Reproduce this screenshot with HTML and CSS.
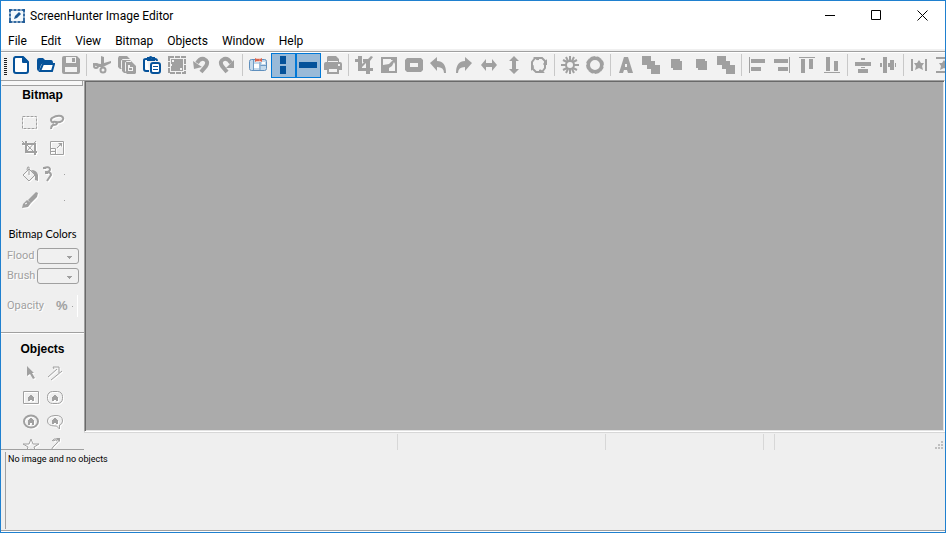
FILE: index.html
```html
<!DOCTYPE html>
<html lang="en">
<head>
<meta charset="utf-8">
<title>ScreenHunter Image Editor</title>
<link rel="stylesheet" href="styles.css">
</head>
<body>
<header class="titlebar">
  <svg class="logo" viewBox="0 0 16 14" aria-hidden="true"><rect x="1" y="1" width="14" height="12" fill="#f4f9fc" stroke="#1a5794" stroke-width="1"/><path d="M0 1h3M5 1h2M9 1h2M13 1h3M0 13h3M5 13h2M9 13h2M13 13h3M1 0v3M1 5v2M1 9v5M15 0v3M15 5v2M15 9v5" stroke="#1a5794" stroke-width="1.500"/><path d="M5 10l1-3 4-4 2 2-4 4z" fill="#1a5794"/></svg>
  <h1 class="title">ScreenHunter Image Editor</h1>
  <button class="win" aria-label="Minimize"><svg viewBox="0 0 11 11"><path d="M0 5.500h10"/></svg></button>
  <button class="win" aria-label="Maximize"><svg viewBox="0 0 11 11"><path d="M.5.5h9v9h-9z"/></svg></button>
  <button class="win" aria-label="Close"><svg viewBox="0 0 11 11"><path d="M.5.5l10 10M10.500.5l-10 10"/></svg></button>
</header>
<nav class="menu">
  <button>File</button><button>Edit</button><button>View</button><button>Bitmap</button><button>Objects</button><button>Window</button><button>Help</button>
</nav>
<div class="toolbar" role="toolbar" aria-label="Main">
  <span class="grip"></span>
  <button class="tool on" aria-label="New"><svg viewBox="0 0 18 18"><path class="l" d="M3 1h8l5 5v9q0 2-2 2H4q-2 0-2-2V3q0-2 2-2z"/><path d="M10 1v5q0 1 1 1h5V5l-4-4z"/></svg></button>
  <button class="tool on" aria-label="Open"><svg viewBox="0 0 18 18"><path d="M0 4q0-2 2-2h4l2 2h6q2 0 2 3H7q-2 0-3 2l-2 6q-2 0-2-2z"/><path class="l" d="M6 8h11l-2 7H3z"/></svg></button>
  <button class="tool" aria-label="Save"><svg viewBox="0 0 18 18"><path fill-rule="evenodd" d="M2 0h13l3 3v13q0 2-2 2H2q-2 0-2-2V2q0-2 2-2zM4 1v6h10V1zM3 11v5h12v-5z"/><path d="M10 2h3v4h-3z"/></svg></button>
  <span class="sep"></span>
  <button class="tool" aria-label="Cut"><svg viewBox="0 0 18 18"><path d="M8 0l3 1v6l7-2v2l-8 4H6L0 9V7l8 1z"/><circle class="l" cx="3" cy="10" r="2"/><circle class="l" cx="10" cy="14" r="2.500"/></svg></button>
  <button class="tool" aria-label="Copy"><svg viewBox="0 0 18 18"><path d="M1 0h8l3 3H5L4 13H2l-2-2V2z"/><path d="M5 4h7l2 2H8v11H6l-2-2V6z"/><path fill="none" stroke="#f2f2f2" d="M3.500 12.500v-8l1-1H10M7.500 15.500v-9l1-1H13"/><path fill-rule="evenodd" d="M8 6h6l4 4v7l-1 1H9l-1-1zM10 9v6h5v-4h-3V9z"/><path d="M11 12h3v2h-3z"/></svg></button>
  <button class="tool on" aria-label="Paste"><svg viewBox="0 0 18 18"><path class="l" d="M6 15H3q-2 0-2-2V4q0-1 2-1h1M12 3q2 0 2 2"/><path class="l" d="M5 4V2h2q0-2 2 0h2v2z"/><rect class="l" x="8" y="7" width="9" height="10" rx="2"/><path d="M10 10h5v1h-5zM10 13h5v1h-5z"/></svg></button>
  <button class="tool" aria-label="Select all"><svg viewBox="0 0 18 18"><path d="M3 3h12v12H3z"/><path class="l" stroke-dasharray="5 1" d="M1 1h16v16H1z"/><path fill="#f2f2f2" d="M4 4h2v2H4zM12 12h2v2h-2zM3 8h1v2H3z"/></svg></button>
  <button class="tool" aria-label="Undo"><svg viewBox="0 0 18 18"><path fill="none" stroke="currentColor" stroke-width="4" d="M4 7q3-5 7-4 5 2 2 7l-5 6"/><path d="M0 5l9 6-8 2z"/></svg></button>
  <button class="tool" aria-label="Redo"><svg viewBox="0 0 18 18"><path fill="none" stroke="currentColor" stroke-width="4" d="M13 7Q10 2 6 3 1 5 4 10l5 6"/><path d="M16 4v8H8z"/></svg></button>
  <span class="sep"></span>
  <button class="tool" aria-label="Merge images"><svg viewBox="0 0 18 18"><rect x=".5" y="3.500" width="17" height="11" rx="2" fill="#c5daec" stroke="#5f8fbd"/><path d="M4.500 4v10M11 4v10M11.500 9.500H17" fill="none" stroke="#6f9bc5"/><path d="M6 2h7v4H6z" fill="#f3d3cc"/><path d="M6 2l3 2-3 2zM13 2l-3 2 3 2zM8 3h3v2H8z" fill="#d9634d"/><path d="M5 8h5v4H5zM13 6h3v2h-3z" fill="#fff"/></svg></button>
  <button class="tool pressed" aria-label="Tile vertically" aria-pressed="true"><svg viewBox="0 0 18 18"><path d="M6 0h6v8H6zM6 10h6v8H6z"/></svg></button>
  <button class="tool pressed" aria-label="Tile horizontally" aria-pressed="true"><svg viewBox="0 0 18 18"><path d="M0 6h18v6H0z"/></svg></button>
  <button class="tool" aria-label="Print"><svg viewBox="0 0 18 18"><path fill-rule="evenodd" d="M4 0h8l3 3v3h1q2 0 2 2v6h-3v4H3v-4H0V8q0-2 2-2h1V1zM4 5v1h10V5zM5 13v3h8v-3zM14 8v2h2V8z"/></svg></button>
  <span class="sep"></span>
  <button class="tool" aria-label="Crop"><svg viewBox="0 0 18 18"><path d="M3 0h4v12h11v3H3V6H0V3h3zM8 3h5l3-3 2 1-3 4v13h-4V7l-5 5-1-2 4-4H8z"/></svg></button>
  <button class="tool" aria-label="Resize"><svg viewBox="0 0 18 18"><path d="M1 1h16v16H1z"/><path fill="#f2f2f2" d="M3 3h8v1h2L9 8l-6 1zM9 12l3-2 2-4 1 2v7H9z"/></svg></button>
  <button class="tool" aria-label="Frame"><svg viewBox="0 0 18 18"><path fill-rule="evenodd" d="M2 2h14l2 2v10l-2 2H2l-2-2V4zM5 7v4h8V7z"/></svg></button>
  <button class="tool" aria-label="Rotate left"><svg viewBox="0 0 18 18"><path d="M0 7l7-6v4q9 0 9 12h-2q0-6-7-6v4z"/></svg></button>
  <button class="tool" aria-label="Rotate right"><svg viewBox="0 0 18 18"><path d="M17 7l-7-6v4q-9 0-9 12h2q0-6 7-6v4z"/></svg></button>
  <button class="tool" aria-label="Flip horizontal"><svg viewBox="0 0 18 18"><path d="M1 9l5-6v4h6V3l5 6-5 6v-4H6v4z"/></svg></button>
  <button class="tool" aria-label="Flip vertical"><svg viewBox="0 0 18 18"><path d="M9 0l5 5h-3v8h3l-5 5-5-5h3V5H4z"/></svg></button>
  <button class="tool" aria-label="Rotate freely"><svg viewBox="0 0 18 18"><path class="l" d="M7 2h5l3 3v7l-3 4H6l-4-4V6l3-4z"/><path d="M3 1h6v5zM17 3v6h-5zM15 17H9v-5zM1 15V9h5z"/><circle cx="8.500" cy="9" r="5" fill="#f2f2f2"/></svg></button>
  <span class="sep"></span>
  <button class="tool" aria-label="Brightness"><svg viewBox="0 0 18 18"><circle class="l" cx="9" cy="9" r="4"/><path class="ray" d="M9 0v5M9 13v5M0 9h5M13 9h5M2 4l4 2M12 12l4 2M16 4l-4 2M2 14l4-2M5 1l2 4M13 1l-2 4M5 17l2-4M13 17l-2-4"/></svg></button>
  <button class="tool" aria-label="Contrast"><svg viewBox="0 0 18 18"><circle cx="9" cy="9" r="7" fill="none" stroke="currentColor" stroke-width="4"/><circle cx="9" cy="9" r="9" fill="none" stroke="#f2f2f2" stroke-width="1" stroke-dasharray="2 5"/></svg></button>
  <span class="sep"></span>
  <button class="tool" aria-label="Text"><svg viewBox="0 0 18 18"><path fill-rule="evenodd" d="M7 1h4l5 16h-5l-1-3H7l-1 3H2zM8 8v3h2V8z"/></svg></button>
  <button class="tool" aria-label="Bring to front"><svg viewBox="0 0 18 18"><path d="M0 0h9v5h4v4h5v9H9v-5H5V9H0z"/></svg></button>
  <button class="tool" aria-label="Bring forward"><svg viewBox="0 0 18 18"><path d="M4 3h9v2h2v9H6v-2H4z"/></svg></button>
  <button class="tool" aria-label="Send backward"><svg viewBox="0 0 18 18"><path d="M4 3h9v2h2v9H6v-2H4z"/></svg></button>
  <button class="tool" aria-label="Send to back"><svg viewBox="0 0 18 18"><path d="M0 0h9v5h4v4h5v9H9v-5H5V9H0z"/></svg></button>
  <span class="sep"></span>
  <button class="tool" aria-label="Align left"><svg viewBox="0 0 18 18"><path d="M1 1h1v16H1zM3 3h14v4H3zM3 11h10v4H3z"/></svg></button>
  <button class="tool" aria-label="Align right"><svg viewBox="0 0 18 18"><path d="M16 1h1v16h-1zM1 3h14v4H1zM5 11h10v4H5z"/></svg></button>
  <button class="tool" aria-label="Align top"><svg viewBox="0 0 18 18"><path d="M1 1h16v1H1zM3 3h4v14H3zM11 3h4v10h-4z"/></svg></button>
  <button class="tool" aria-label="Align bottom"><svg viewBox="0 0 18 18"><path d="M1 16h16v1H1zM3 1h4v14H3zM11 5h4v10h-4z"/></svg></button>
  <span class="sep"></span>
  <button class="tool" aria-label="Center vertically"><svg viewBox="0 0 18 18"><path d="M7 2h4v2H7zM1 6h16v4H1zM7 11h4v1H7zM4 13h10v4H4z"/></svg></button>
  <button class="tool" aria-label="Center horizontally"><svg viewBox="0 0 18 18"><path d="M1 7h2v4H1zM4 1h4v16H4zM9 7h2v4H9zM11 4h4v10h-4zM16 7h1v4h-1z"/></svg></button>
  <span class="sep"></span>
  <button class="tool" aria-label="Space across"><svg viewBox="0 0 18 18"><path d="M1 3h2v12H1zM15 3h2v12h-2zM9 4l2 3h3l-2 3 1 4-4-2-4 2 1-4-2-3h3z"/></svg></button>
  <button class="tool" aria-label="Space down"><svg viewBox="0 0 18 18"><path d="M1 1h14v2H1zM1 15h14v2H1zM9 4l2 3h3l-2 3 1 4-4-2-4 2 1-4-2-3h3z"/></svg></button>
</div>
<main class="work">
  <aside class="palettes">
    <section class="palette">
      <div class="handle"></div>
      <h2>Bitmap</h2>
      <div class="rows bitmap">
        <div class="row"><button aria-label="Select area"><svg viewBox="0 0 16 16"><path class="n" stroke-dasharray="3 1" d="M.5 2.500h14v12H.5z"/></svg></button><button aria-label="Lasso"><svg viewBox="0 0 16 16"><path class="n" stroke-width="2" d="M5 9L3 8q-2-2 0-4 5-3 9-2 4 2 1 5-3 2-6 1"/><path class="n" stroke-width="2" d="M4 8q3-1 4 1 0 2-4 2-2 1-2 4"/></svg></button></div>
        <div class="row"><button aria-label="Crop bitmap"><svg viewBox="0 0 16 16"><path class="n" stroke-width="2" d="M0 4h13v11M4 1v11h11"/><path class="n" d="M0 1l3 3M14 1L5 11M5 5l7 7"/></svg></button><button aria-label="Resize bitmap"><svg viewBox="0 0 16 16"><path class="n" d="M1.500 1.500h13v13h-13zM1.500 8.500h5v6M1 11.500h5M8 8l4-4"/><path d="M9 3h4v4z"/></svg></button></div>
        <div class="row tight"><button aria-label="Flood fill"><svg viewBox="0 0 16 16"><path class="n" d="M1 9l6-6 6 6-6 6zM7 9V1Q5 0 5 4"/><path d="M9 4q6 0 7 5v6l-3-1V9z"/></svg></button><button aria-label="Magic wand"><svg viewBox="0 0 16 16"><path class="n" stroke-width="2" d="M2 2q5-2 6 1 0 3-4 3 5 0 5 3l-4 6"/><path d="M1 1h3v2H1zM3 5h3v3H3z"/></svg></button><span class="dot"></span></div>
        <div class="row tight"><button aria-label="Brush"><svg viewBox="0 0 16 16"><path d="M14 0l2 1-1 4-6 6-3-3zM5 8l4 3-3 4-6 1 1-4z"/><path d="M3 12l2-1" stroke="#fff"/></svg></button><span class="blank"></span><span class="dot"></span></div>
      </div>
      <h3>Bitmap Colors</h3>
      <div class="field"><label for="flood">Flood</label><select id="flood" disabled><option></option></select></div>
      <div class="field"><label for="brush">Brush</label><select id="brush" disabled><option></option></select></div>
      <div class="field opacity"><span>Opacity</span><button aria-label="Opacity percent">%</button><span class="dot"></span><span class="edge"></span></div>
    </section>
    <section class="palette">
      <h2>Objects</h2>
      <div class="rows objects">
        <div class="row"><button aria-label="Pointer"><svg viewBox="0 0 16 16"><path d="M4 1l7 7H9l3 5-2 1-3-5-3 2z"/></svg></button><button aria-label="Arrow"><svg viewBox="0 0 16 16"><path class="n" d="M1 12L10 4M4 15L15 6M6 2h6v6M6 2l1 2"/></svg></button></div>
        <div class="row"><button aria-label="Rectangle text"><svg viewBox="0 0 16 16"><path class="n" d="M.5 2.500h15v12H.5z"/><path d="M7 6h2v1h1v1h1v4H9v-1H7v1H5V8h1V7h1z"/></svg></button><button aria-label="Rounded text"><svg viewBox="0 0 16 16"><rect class="n" x=".5" y="2.500" width="15" height="12" rx="5"/><path d="M7 6h2v1h1v1h1v4H9v-1H7v1H5V8h1V7h1z"/></svg></button></div>
        <div class="row"><button aria-label="Ellipse text"><svg viewBox="0 0 16 16"><ellipse class="n" cx="8" cy="8.500" rx="7" ry="6" stroke-width="2"/><path d="M7 5h2v1h1v1h1v5H9v-2H7v2H5V7h1V6h1z"/></svg></button><button aria-label="Speech bubble"><svg viewBox="0 0 16 16"><path class="n" d="M8 13Q.5 13 .5 8T8 2.500 15.500 8q0 3-3 4v4l-3-3z"/><path d="M7 5h2v1h1v1h1v4H9v-1H7v1H5V7h1V6h1z"/></svg></button></div>
        <div class="row"><button aria-label="Star"><svg viewBox="0 0 16 16"><path class="n" d="M8 2l2 5h6l-5 3 2 6-5-4-5 4 2-6-5-3h6z"/></svg></button><button aria-label="Curve"><svg viewBox="0 0 16 16"><path class="n" d="M5 4q2-3 5-2 3 2 0 4l-4 4-3 5M6 4q3-2 4 0"/><path d="M9 1h4v4z"/></svg></button></div>
      </div>
    </section>
  </aside>
  <div class="view">
    <div class="canvas"></div>
    <div class="status"><span></span><span></span><span></span><span></span><span></span>
      <svg class="sizer" viewBox="0 0 8 8" aria-hidden="true"><path d="M6 0h2v2H6zM3 3h2v2H3zM6 3h2v2H6zM0 6h2v2H0zM3 6h2v2H3zM6 6h2v2H6z"/></svg>
    </div>
  </div>
</main>
<footer class="info"><div class="infobox"><p>No image and no objects</p></div></footer>
</body>
</html>
```
FILE: styles.css
```css
* { box-sizing: border-box; }
html, body { height: 100%; }
body {
  margin: 0;
  display: flex;
  flex-direction: column;
  overflow: hidden;
  border: 1px solid #1f80cf;
  background: #efefef;
  color: #000;
  font: 12px/16px Roboto, sans-serif;
}
h1, h2, h3, p { margin: 0; font: inherit; }
button { margin: 0; padding: 0; border: 0; background: none; color: inherit; font: inherit; }
svg { display: block; flex: none; }

.titlebar { display: flex; align-items: center; height: 29px; flex: none; background: #fff; padding-left: 8px; }
.logo { width: 16px; height: 14px; }
.title { flex: 1; margin-left: 5px; }
.win { width: 46px; height: 29px; display: grid; place-items: center; }
.win svg { width: 11px; height: 11px; fill: none; stroke: #000; }

.menu { display: flex; flex: none; height: 20px; background: #fff; border-bottom: 1px solid #f0f0f0; }
.menu button { padding: 2px 7px 0; line-height: 18px; }

.toolbar {
  display: flex;
  flex: none;
  height: 29px;
  margin-top: 1px;
  padding: 1px 0 0 3px;
  border-top: 1px solid #a0a0a0;
  background: #f2f2f2;
  box-shadow: inset 0 1px #fff;
  overflow: hidden;
}
.grip { flex: none; width: 3px; height: 17px; margin: 5px 2px 0 0; background: repeating-linear-gradient(#222 0 1px, #f2f2f2 1px 2px); }
.tool { flex: none; width: 25px; height: 25px; padding: 3px 4px 4px 3px; color: #a0a0a0; }
.tool svg { width: 18px; height: 18px; fill: currentColor; }
.tool .l { fill: none; stroke: currentColor; stroke-width: 2; }
.tool .ray { fill: none; stroke: currentColor; stroke-width: 2; }
.tool.on { color: #05529a; }
.tool.on .l { fill: #fff; }
.tool.pressed { color: #05529a; background: #99bad8; box-shadow: inset 0 0 0 1px #0078d7; }
.sep { flex: none; width: 6px; height: 22px; margin-top: 1px; background: linear-gradient(#c8c8c8, #c8c8c8) 2px 0 / 1px 100% no-repeat; }

.work { flex: 1; min-height: 0; display: flex; }
.palettes { flex: none; width: 83px; overflow: hidden; border-bottom: 1px solid #a0a0a0; border-top: 1px solid #a0a0a0; }
.palette { border-bottom: 1px solid #a0a0a0; box-shadow: 0 1px #fff; padding-bottom: 14px; }
.palette + .palette { padding-top: 7px; border: 0; box-shadow: none; }
.handle { height: 5px; margin: 0 1px; border: solid #a0a0a0; border-width: 0 1px 1px 0; background: #f8f8f8; }
.palette h2 { font: bold 12px/18px "Liberation Sans", sans-serif; text-align: center; }
.palette h3 { font: 11px/16px Lato, sans-serif; text-align: center; margin: 13px 0 4px; }
.row { display: flex; align-items: center; color: #a0a0a0; }
.row svg { width: 16px; height: 16px; fill: currentColor; filter: drop-shadow(1px 1px 0 #fff); }
.row .n { fill: none; stroke: currentColor; }
.bitmap { padding: 5px 0 0 21px; }
.bitmap .row { height: 26px; gap: 11px; }
.bitmap .tight { gap: 4px; }
.objects { padding: 3px 0 0 22px; }
.objects .row { height: 24px; gap: 8px; }
.dot { width: 1px; height: 1px; background: #a0a0a0; }
.tight .dot { margin-left: 2px; }
.blank { width: 16px; }
.field { display: flex; align-items: center; height: 20px; padding-left: 6px; color: #a0a0a0; font: 11px/16px Roboto, sans-serif; text-shadow: 1px 1px #fff; }
.field label { width: 30px; }
.field select {
  appearance: none;
  width: 42px;
  height: 16px;
  border: 1px solid #a0a0a0;
  border-radius: 3px;
  opacity: 1;
  background: linear-gradient(#a0a0a0, #a0a0a0) 29px 7px / 5px 1px no-repeat, linear-gradient(#a0a0a0, #a0a0a0) 30px 8px / 3px 1px no-repeat, linear-gradient(#a0a0a0, #a0a0a0) 31px 9px / 1px 1px no-repeat, #f0f0f0;
}
.opacity { height: 24px; margin-top: 8px; }
.opacity button { margin: 0 4px 0 12px; font: bold 13px/16px "Liberation Sans", sans-serif; }
.edge { width: 1px; height: 22px; margin-left: 4px; background: #fff; }

.view { flex: 1; min-width: 0; display: flex; flex-direction: column; }
.canvas {
  flex: 1;
  background: #ababab;
  border: solid;
  border-width: 1px;
  border-color: #a0a0a0 #fff #fff #a0a0a0;
  box-shadow: inset 1px 1px #696969, inset -1px -1px #e3e3e3;
}
.status { position: relative; flex: none; display: grid; grid-template-columns: 1fr 208px 158px 11px 171px; height: 18px; padding-top: 1px; border-top: 1px solid #d7d7d7; }
.status span + span { border-left: 1px solid #d7d7d7; }
.sizer { position: absolute; right: 2px; bottom: 1px; width: 8px; height: 8px; fill: #bfbfbf; }

.info { flex: none; height: 82px; padding: 2px 0 2px 4px; border-bottom: 1px solid #fff; box-shadow: inset 0 -1px #a0a0a0; }
.infobox { height: 77px; border-left: 1px solid #a0a0a0; padding-left: 2px; }
.infobox p { white-space: nowrap; font: 9px/14px Roboto, sans-serif; }
```
